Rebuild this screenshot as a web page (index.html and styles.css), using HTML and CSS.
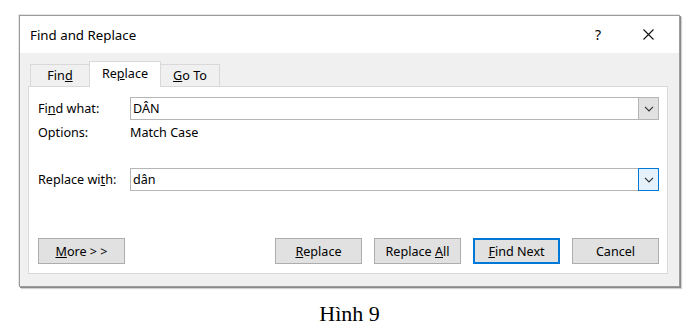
FILE: index.html
```html
<!DOCTYPE html>
<html lang="vi">
<head>
    <meta charset="UTF-8">
    <title>Find and Replace</title>
    <link rel="stylesheet" href="styles.css">
</head>
<body>
    <div class="figure">
        <div class="dialog">
            <div class="titlebar">
                <span class="title">Find and Replace</span>
                <span class="help">?</span>
                <svg class="close" width="11" height="11" viewBox="0 0 11 11">
                    <path d="M0.5 0.5 L10.5 10.5 M10.5 0.5 L0.5 10.5" stroke="#111" stroke-width="1.1" fill="none"/>
                </svg>
            </div>
            <div class="dialog-body">
                <div class="tabs">
                    <div class="tab">Fin<u>d</u></div>
                    <div class="tab active">Re<u>p</u>lace</div>
                    <div class="tab"><u>G</u>o To</div>
                </div>
                <div class="panel">
                    <div class="row">
                        <label class="label">Fi<u>n</u>d what:</label>
                        <div class="combo">
                            <span class="combo-text">DÂN</span>
                            <span class="drop">
                                <svg width="10" height="6" viewBox="0 0 10 6"><polyline points="1,0.8 5,4.8 9,0.8" stroke="#333" stroke-width="1.2" fill="none"/></svg>
                            </span>
                        </div>
                    </div>
                    <div class="row options">
                        <span class="label">Options:</span>
                        <span class="option-value">Match Case</span>
                    </div>
                    <div class="row replace-row">
                        <label class="label">Replace wi<u>t</u>h:</label>
                        <div class="combo">
                            <span class="combo-text">dân</span>
                            <span class="drop focused">
                                <svg width="10" height="6" viewBox="0 0 10 6"><polyline points="1,0.8 5,4.8 9,0.8" stroke="#333" stroke-width="1.2" fill="none"/></svg>
                            </span>
                        </div>
                    </div>
                    <div class="buttons">
                        <button class="btn"><u>M</u>ore &gt; &gt;</button>
                        <div class="spacer"></div>
                        <button class="btn"><u>R</u>eplace</button>
                        <button class="btn">Replace <u>A</u>ll</button>
                        <button class="btn default"><u>F</u>ind Next</button>
                        <button class="btn">Cancel</button>
                    </div>
                </div>
            </div>
        </div>
        <div class="caption">Hình 9</div>
    </div>
</body>
</html>
```

FILE: styles.css
```css
body {
    margin: 0;
    background: #ffffff;
    font-family: 'Noto Sans', 'Open Sans', sans-serif;
    color: #000;
}
.figure {
    width: 661px;
    margin: 15px 0 0 19px;
}
.dialog {
    border: 1px solid #9c9c9c;
    box-shadow: 1px 1px 0 #8a8a8a, 2px 2px 1px #d2d2d2, -1px -1px 0 #e4e4e4;
    background: #f0f0f0;
}
.titlebar {
    height: 37px;
    background: #ffffff;
    display: flex;
    align-items: center;
    padding: 0 25px 0 10px;
}
.title {
    font-size: 13.3px;
    flex: 1;
}
.help {
    font-size: 14px;
    margin-right: 42px;
}
.close {
    display: block;
}
.dialog-body {
    padding: 8px 11px 12px 8px;
}
.tabs {
    display: flex;
    align-items: flex-end;
    height: 25px;
    padding-left: 2px;
}
.tab {
    height: 22px;
    box-sizing: border-box;
    border: 1px solid #d9d9d9;
    border-bottom: none;
    font-size: 12.6px;
    display: flex;
    align-items: center;
    justify-content: center;
    background: #f0f0f0;
}
.tab:nth-child(1) {
    width: 59px;
    border-right: none;
}
.tab:nth-child(3) {
    width: 59px;
    border-left: none;
}
.tab.active {
    width: 72px;
    height: 26px;
    background: #ffffff;
    margin-bottom: -1px;
    position: relative;
    z-index: 1;
    padding-bottom: 2px;
}
.panel {
    background: #ffffff;
    border: 1px solid #d9d9d9;
    height: 188px;
    box-sizing: border-box;
    padding: 10px 8px 0 9px;
}
.row {
    display: flex;
    align-items: center;
    font-size: 12.6px;
}
.label {
    width: 92px;
    flex-shrink: 0;
}
.combo {
    flex: 1;
    height: 23px;
    box-sizing: border-box;
    border: 1px solid #b5b5b5;
    display: flex;
    align-items: center;
}
.combo-text {
    flex: 1;
    padding-left: 2px;
}
.drop {
    width: 20px;
    height: 21px;
    box-sizing: border-box;
    background: #e1e1e1;
    border-left: 1px solid #b5b5b5;
    display: flex;
    align-items: center;
    justify-content: center;
}
.drop.focused {
    background: #e5f1fb;
    border: 1px solid #0078d7;
    height: 23px;
    width: 21px;
    margin-right: -1px;
}
.drop svg {
    display: block;
}
.options {
    height: 18px;
    margin-top: 3px;
}
.replace-row {
    margin-top: 27px;
}
.buttons {
    display: flex;
    margin-top: 47px;
    padding-right: 0;
}
.spacer {
    flex: 1;
}
.btn {
    width: 87px;
    height: 26px;
    box-sizing: border-box;
    margin-left: 12px;
    background: #e1e1e1;
    border: 1px solid #adadad;
    font-family: 'Noto Sans', 'Open Sans', sans-serif;
    font-size: 12.6px;
    color: #000;
    padding: 0;
}
.btn:first-child {
    margin-left: 0;
}
.btn.default {
    border: 2px solid #0078d7;
}
.caption {
    margin-top: 14px;
    text-align: center;
    font-family: 'Liberation Serif', serif;
    font-size: 22px;
}
```
